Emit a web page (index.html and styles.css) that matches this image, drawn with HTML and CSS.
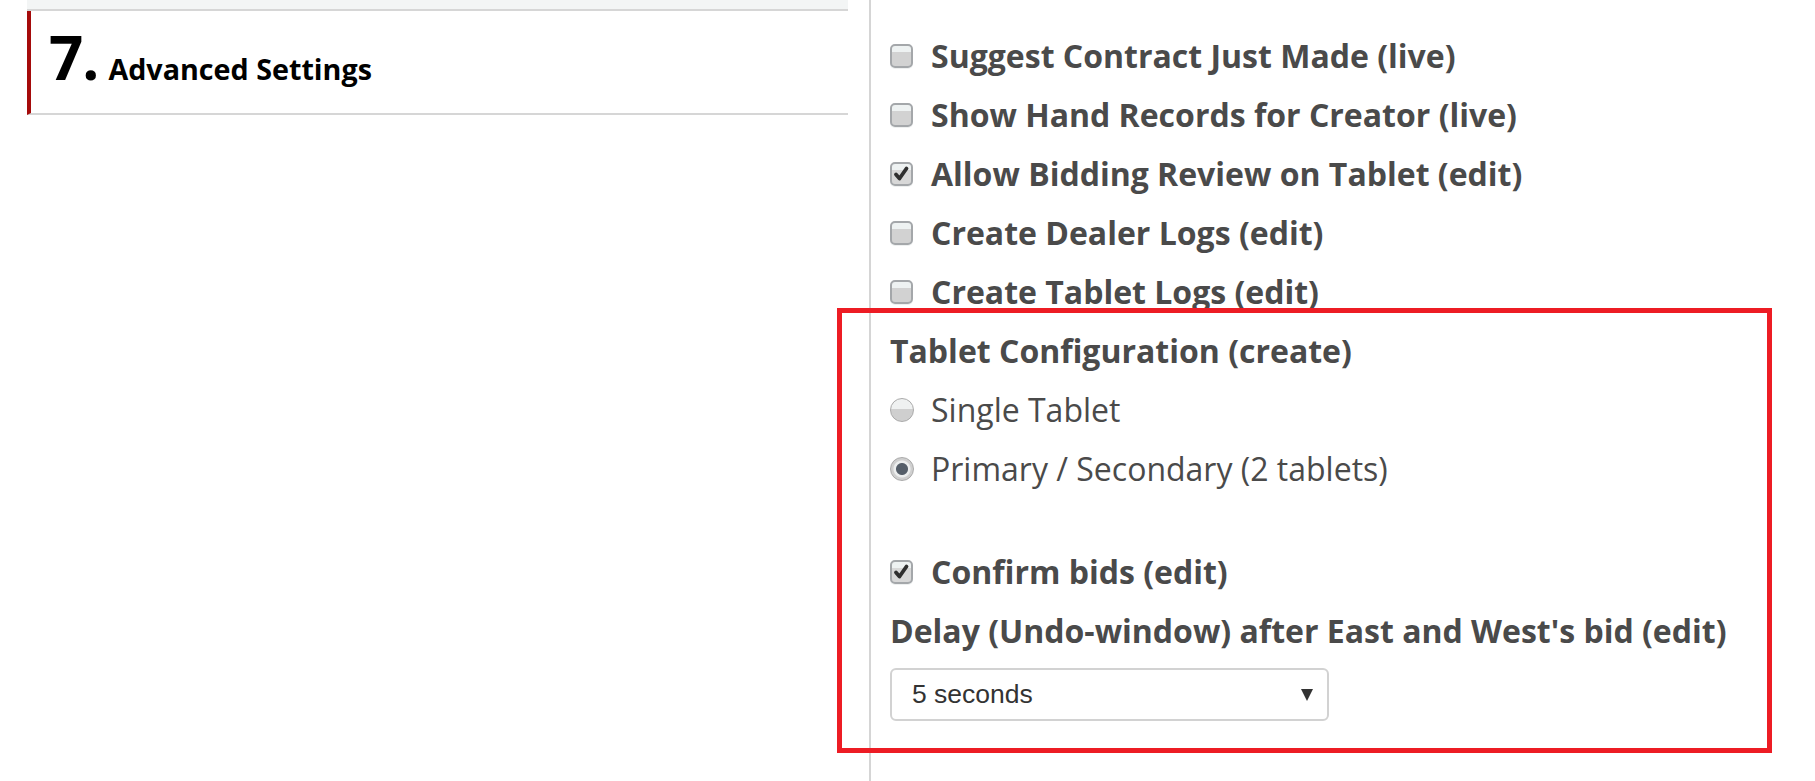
FILE: index.html
```html
<!DOCTYPE html>
<html lang="en">
<head>
<meta charset="utf-8">
<title>Advanced Settings</title>
<link rel="stylesheet" href="styles.css">
</head>
<body>
<div class="page">
  <div class="left">
    <div class="band"></div>
    <div class="card">
      <h2 class="title"><span class="num">7.</span><span class="name">Advanced Settings</span></h2>
    </div>
  </div>
  <div class="right">
    <label class="row bold"><span class="box"></span>Suggest Contract Just Made (live)</label>
    <label class="row bold"><span class="box"></span>Show Hand Records for Creator (live)</label>
    <label class="row bold"><span class="box checked"><svg viewBox="0 0 23 24" width="23" height="24"><path d="M6 12.5 L9.5 16.5 L16.5 6.5" fill="none" stroke="#2f2f2f" stroke-width="3.8" stroke-linecap="round" stroke-linejoin="round"/></svg></span>Allow Bidding Review on Tablet (edit)</label>
    <label class="row bold"><span class="box"></span>Create Dealer Logs (edit)</label>
    <label class="row bold"><span class="box"></span>Create Tablet Logs (edit)</label>
    <div class="row bold">Tablet Configuration (create)</div>
    <label class="row"><span class="radio"></span>Single Tablet</label>
    <label class="row"><span class="radio on"></span>Primary / Secondary (2 tablets)</label>
    <label class="row bold confirm"><span class="box checked"><svg viewBox="0 0 23 24" width="23" height="24"><path d="M6 12.5 L9.5 16.5 L16.5 6.5" fill="none" stroke="#2f2f2f" stroke-width="3.8" stroke-linecap="round" stroke-linejoin="round"/></svg></span>Confirm bids (edit)</label>
    <div class="row bold">Delay (Undo-window) after East and West's bid (edit)</div>
    <div class="select"><span>5 seconds</span><span class="arrow"></span></div>
  </div>
</div>
<div class="highlight"></div>
</body>
</html>
```
FILE: styles.css
```css
html, body {
  margin: 0;
  padding: 0;
  background: #fff;
}
body {
  font-family: "Open Sans", "Liberation Sans", sans-serif;
  width: 1815px;
  height: 781px;
  overflow: hidden;
  position: relative;
}
.page {
  display: flex;
  height: 781px;
}
.left {
  width: 821px;
  padding-left: 27px;
  padding-right: 21px;
}
.band {
  height: 9px;
  background: #f3f5f5;
  border-bottom: 2px solid #d6d6d6;
}
.card {
  border-left: 4px solid #a50b0b;
  border-bottom: 2px solid #d6d6d6;
  height: 76px;
  padding-top: 16px;
  padding-left: 18px;
  padding-bottom: 10px;
}
.title {
  margin: 0;
  display: flex;
  align-items: baseline;
  color: #000;
  font-weight: 700;
}
.num {
  font-size: 60px;
  line-height: 60px;
  letter-spacing: -1px;
}
.name {
  font-size: 28.7px;
  margin-left: 10px;
}
.right {
  flex: 1;
  border-left: 2px solid #d5d5d5;
  padding-left: 19px;
  padding-top: 26px;
  color: #4a4a4a;
  font-size: 32px;
}
.row {
  display: flex;
  align-items: center;
  height: 59px;
  white-space: nowrap;
}
.bold {
  font-weight: 700;
}
.confirm {
  margin-top: 44px;
}
.box {
  width: 19px;
  height: 20px;
  border: 2px solid #a4a7aa;
  border-radius: 5px;
  background: linear-gradient(#eef2f2 0, #eef2f2 32%, #d2d2d2 32%, #d2d2d2 100%);
  margin-right: 18px;
  flex: none;
  position: relative;
  box-shadow: 0 1px 0 #eef0f0;
}
.box.checked {
  background: linear-gradient(#eef2f2 0, #eef2f2 32%, #d8d8d8 32%, #d8d8d8 100%);
}
.box svg {
  position: absolute;
  left: -2px;
  top: -2px;
}
.radio {
  width: 22px;
  height: 22px;
  border: 1px solid #aaaaaa;
  border-radius: 50%;
  background: linear-gradient(#eff1f1 0, #eff1f1 45%, #cfcfcf 45%, #cfcfcf 100%);
  margin-right: 17px;
  flex: none;
  position: relative;
}
.radio.on {
  background: radial-gradient(circle, #555e69 0, #555e69 5.5px, #eceeee 6.5px, #eceeee 8px, #cfcfcf 9px);
}
.select {
  margin-top: 8px;
  height: 49px;
  border: 2px solid #d2d2d2;
  border-radius: 6px;
  display: flex;
  align-items: center;
  justify-content: space-between;
  padding-left: 20px;
  padding-right: 14px;
  box-sizing: content-box;
  width: 401px;
  font-family: "Liberation Sans", Arial, sans-serif;
  font-size: 26.5px;
  color: #333;
}
.arrow {
  width: 0;
  height: 0;
  border-left: 6px solid transparent;
  border-right: 6px solid transparent;
  border-top: 12px solid #333;
}
.highlight {
  position: absolute;
  left: 837px;
  top: 308px;
  width: 925px;
  height: 435px;
  border: 5px solid #ed1c24;
}
```
